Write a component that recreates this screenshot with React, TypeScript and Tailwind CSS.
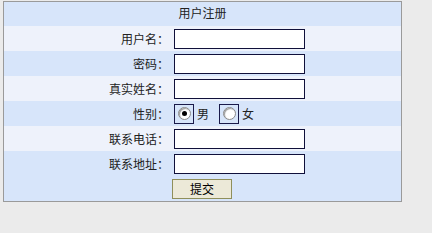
import React from 'react';

const rows = [
  { label: '用户名：', type: 'text', bg: 'bg-[#eef2fb]' },
  { label: '密码：', type: 'password', bg: 'bg-[#d7e5fa]' },
  { label: '真实姓名：', type: 'text', bg: 'bg-[#eef2fb]' },
  { label: '性别：', type: 'radio', bg: 'bg-[#d7e5fa]' },
  { label: '联系电话：', type: 'text', bg: 'bg-[#eef2fb]' },
  { label: '联系地址：', type: 'text', bg: 'bg-[#d7e5fa]' },
];

function Radio({ checked }: { checked?: boolean }) {
  return (
    <span className="flex h-[20px] w-[20px] items-center justify-center border border-[#1a1a4a] bg-[#d7e5fa]">
      <span className="flex h-[13px] w-[13px] items-center justify-center rounded-full border border-[#8a8a8a] bg-white shadow-[inset_1px_1px_1px_#9a9a9a]">
        {checked && <span className="h-[5px] w-[5px] rounded-full bg-black" />}
      </span>
    </span>
  );
}

export default function App() {
  return (
    <div
      className="h-[233px] w-[432px] bg-[#ebebeb] pl-[3px] pt-[1px] text-[12px] text-[#222]"
      style={{ fontFamily: '"Noto Sans CJK SC", "Noto Sans", sans-serif' }}
    >
      <div className="w-[399px] border border-[#9a9a9a]">
        <div className="flex h-[24px] items-center justify-center bg-[#d7e5fa] pb-[2px]">用户注册</div>
        {rows.map((r) => (
          <div key={r.label} className={`flex h-[25px] items-center ${r.bg}`}>
            <div className="w-[167px] pr-[2px] text-right">{r.label}</div>
            <div className="flex items-center pl-[3px]">
              {r.type === 'radio' ? (
                <div className="flex items-center">
                  <Radio checked />
                  <span className="ml-[3px] mr-[10px]">男</span>
                  <Radio />
                  <span className="ml-[3px]">女</span>
                </div>
              ) : (
                <input
                  type={r.type}
                  className="h-[20px] w-[131px] border border-[#10103a] bg-white outline-none"
                />
              )}
            </div>
          </div>
        ))}
        <div className="flex h-[25px] items-center bg-[#d7e5fa]">
          <div className="w-[167px]" />
          <button className="ml-[1px] flex h-[20px] w-[60px] items-center justify-center border border-[#8f8f5a] bg-[#ece9d8] text-[12px] text-black">
            提交
          </button>
        </div>
      </div>
    </div>
  );
}
